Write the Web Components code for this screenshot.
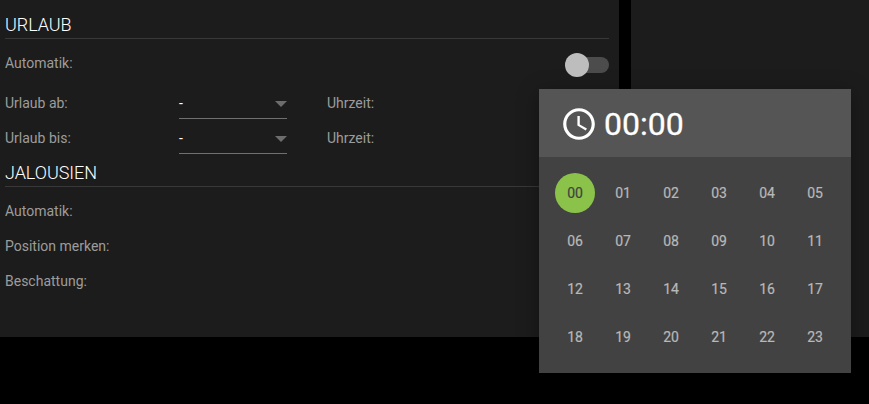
<!DOCTYPE html>
<html lang="de">
<head>
<meta charset="utf-8">
<title>Urlaub</title>
<style>
html,body{margin:0;height:100%;background:#000;overflow:hidden}
body{font-family:Roboto,sans-serif;font-size:14px;color:#9c9c9c}
</style>
</head>
<body>
<app-page>
  <app-panel>
    <section-title class="first">URLAUB</section-title>
    <setting-row class="tall"><span>Automatik:</span><toggle-switch slot="end"></toggle-switch></setting-row>
    <setting-row><span>Urlaub ab:</span><select-field slot="field">-</select-field><span slot="extra">Uhrzeit:</span></setting-row>
    <setting-row><span>Urlaub bis:</span><select-field slot="field">-</select-field><span slot="extra">Uhrzeit:</span></setting-row>
    <section-title>JALOUSIEN</section-title>
    <setting-row><span>Automatik:</span></setting-row>
    <setting-row><span>Position merken:</span></setting-row>
    <setting-row><span>Beschattung:</span></setting-row>
  </app-panel>
  <app-panel></app-panel>
  <time-picker slot="overlay" value="00:00"></time-picker>
</app-page>
<script>
function define(name, markup, setup) {
  const template = document.createElement('template');
  template.innerHTML = markup;
  customElements.define(name, class extends HTMLElement {
    constructor() {
      super();
      this.attachShadow({mode: 'open'}).append(template.content.cloneNode(true));
    }
    connectedCallback() { if (setup) setup(this, this.shadowRoot); }
  });
}
define('app-page', `<style>
  :host{display:block;position:relative;height:404px;overflow:hidden}
  main{display:grid;grid-template-columns:619px 1fr;column-gap:12px;height:337px}
  ::slotted([slot=overlay]){position:absolute;left:539px;top:89px}
</style><main><slot></slot></main><slot name="overlay"></slot>`);
define('app-panel', `<style>
  :host{display:block;box-sizing:border-box;padding:0 10px 0 5px;background:#1c1c1c}
</style><slot></slot>`);
define('section-title', `<style>
  :host{display:block;box-sizing:border-box;height:31px;padding-top:5px;margin-bottom:7px;border-bottom:1px solid #383838;
    font-size:18px;line-height:24px;font-weight:300;letter-spacing:-.05px;color:#fff}
  :host(.first){height:39px;padding-top:13px}
</style><slot></slot>`);
define('setting-row', `<style>
  :host{display:grid;grid-template-columns:174px 148px 1fr auto;height:35px;line-height:35px}
  :host(.tall){height:40px}
  .end{padding-top:7px}
</style><div><slot></slot></div><div><slot name="field"></slot></div><div><slot name="extra"></slot></div><div class="end"><slot name="end"></slot></div>`);
define('toggle-switch', `<style>
  :host{display:flex;align-items:center;width:44px;height:24px}
  .thumb{width:24px;height:24px;border-radius:50%;background:#bdbdbd;z-index:1}
  .track{width:42px;height:16px;margin-left:-22px;border-radius:8px;background:#4c4c4c}
</style><div class="thumb"></div><div class="track"></div>`);
define('select-field', `<style>
  :host{display:flex;box-sizing:border-box;width:108px;height:33px;padding-top:2px;border-bottom:1px solid #707070;
    align-items:center;justify-content:space-between;color:#fff;line-height:30px}
  svg{display:block;margin:2px 0 0}
</style><slot></slot><svg width="12" height="6"><path d="M0 0h12L6 6z" fill="#6d6d6d"/></svg>`);
define('time-picker', `<style>
  :host{display:block;width:312px;height:284px;background:#424242;box-shadow:0 4px 20px rgba(0,0,0,.35)}
  header{display:flex;align-items:center;box-sizing:border-box;height:68px;padding:2px 0 0 21px;background:#555;color:#fff;
    font-size:32px;line-height:40px}
  svg{display:block;width:38px;height:38px;margin-right:6px;fill:#fff}
  .time{-webkit-text-stroke:.3px #fff}
  .hours{display:grid;grid-template-columns:repeat(6,40px);grid-auto-rows:40px;gap:8px;padding:16px}
  .hours span{border-radius:50%;text-align:center;line-height:40px;color:#b8b8b8;-webkit-text-stroke:.2px currentColor}
  .hours .on{background:#8bc34a;color:#424242}
</style><header>
<svg viewBox="0 0 24 24"><path d="M11.99 2C6.47 2 2 6.48 2 12s4.47 10 9.99 10C17.52 22 22 17.52 22 12S17.52 2 11.99 2zM12 20c-4.42 0-8-3.58-8-8s3.58-8 8-8 8 3.58 8 8-3.58 8-8 8z"/><path d="M12.5 7H11v6l5.25 3.15.75-1.23-4.5-2.67z"/></svg>
<div class="time"></div></header><div class="hours"></div>`, (el, root) => {
  const value = el.getAttribute('value');
  root.querySelector('.time').textContent = value;
  root.querySelector('.hours').replaceChildren(...Array.from({length: 24}, (_, i) => {
    const cell = document.createElement('span');
    cell.textContent = String(i).padStart(2, '0');
    if (cell.textContent === value.slice(0, 2)) cell.className = 'on';
    return cell;
  }));
});
</script>
</body>
</html>
